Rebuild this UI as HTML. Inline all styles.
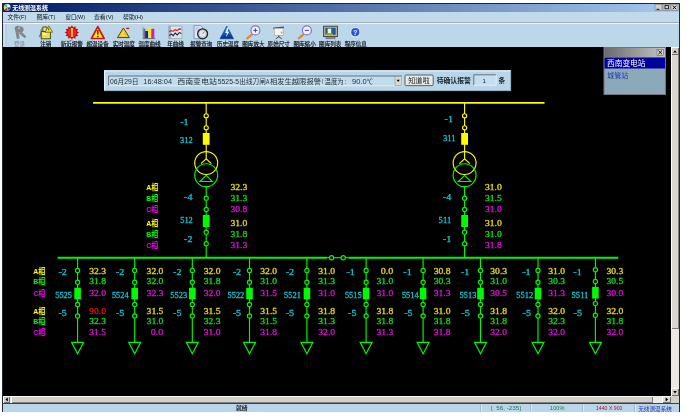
<!DOCTYPE html><html lang="zh-CN"><head><meta charset="utf-8"><title>无线测温系统</title>
<style>
html,body{margin:0;padding:0;background:#fff;}
body{width:686px;height:418px;position:relative;overflow:hidden;font-family:"Liberation Sans","Noto Sans CJK SC",sans-serif;}
.abs{position:absolute;}
svg text{white-space:pre;}
</style></head><body>
<div class="abs" style="left:2px;top:3px;width:678px;height:409px;background:#1c2a3a;"></div>
<div class="abs" style="left:3px;top:3px;width:676px;height:409px;background:#bcd7eb;"></div>
<div class="abs" style="left:3px;top:3px;width:676px;height:9px;background:linear-gradient(to right,#0a246a 0%,#0a246a 6%,#a6caf0 100%);border-top:1px solid #16264a;box-sizing:border-box;"></div>
<div class="abs" style="left:3px;top:12px;width:676px;height:11px;background:#c0daec;"></div>
<div class="abs" style="left:3px;top:22px;width:676px;height:25px;background:#bcd6ea;border-top:1px solid #a4adb5;box-sizing:border-box;box-shadow:inset 0 1px 0 #eef5fb;"></div>
<div class="abs" style="left:3px;top:47px;width:668px;height:349px;background:#000;"></div>
<div class="abs" style="left:671px;top:47px;width:8px;height:349px;background:#ebe9e4;"></div>
<div class="abs" style="left:671px;top:47px;width:8px;height:282px;background:#dad7d0;box-shadow:inset 1px 1px 0 #fff,inset -1px -1px 0 #808080;"></div>
<div class="abs" style="left:671px;top:47px;width:8px;height:8px;background:#d4d0c8;box-shadow:inset 1px 1px 0 #fff,inset -1px -1px 0 #707070;"></div>
<div class="abs" style="left:671px;top:388px;width:8px;height:8px;background:#d4d0c8;box-shadow:inset 1px 1px 0 #fff,inset -1px -1px 0 #707070;"></div>
<div class="abs" style="left:3px;top:396px;width:676px;height:8px;background:#d4d0c8;border-bottom:1px solid #404040;box-sizing:border-box;"></div>
<div class="abs" style="left:3px;top:396px;width:668px;height:7px;background:#eceae5;"></div>
<div class="abs" style="left:11px;top:396px;width:642px;height:7px;background:#d4d0c8;box-shadow:inset 1px 1px 0 #fff,inset -1px -1px 0 #808080;"></div>
<div class="abs" style="left:3px;top:396px;width:7px;height:7px;background:#d4d0c8;box-shadow:inset 1px 1px 0 #fff,inset -1px -1px 0 #707070;"></div>
<div class="abs" style="left:662px;top:396px;width:9px;height:7px;background:#dedcd6;box-shadow:inset 1px 1px 0 #fff,inset -1px -1px 0 #707070;"></div>
<div class="abs" style="left:3px;top:404px;width:676px;height:8px;background:#b9d5ea;"></div>
<svg class="abs" style="left:0;top:0;will-change:transform" width="686" height="418" viewBox="0 0 686 418">
<circle cx="7.2" cy="7.4" r="3.3" fill="#f4f4f4"/><path d="M7.2 7.4L4.2 5.9A3.3 3.3 0 0 0 4.6 9.5Z" fill="#f4dc10"/><path d="M7.2 7.4L4.6 9.5A3.3 3.3 0 0 0 7.6 10.7Z" fill="#f01808"/><path d="M7.2 7.4L4.2 5.9A3.3 3.3 0 0 1 7.2 4.1Z" fill="#20c8a8"/><path d="M7.2 7.4L10.5 7.2A3.3 3.3 0 0 1 8.8 10.3Z" fill="#1838e0"/>
<text x="12.20" y="10.10" font-size="6.20" fill="#fff" text-anchor="start" font-weight="bold" font-family='"Liberation Sans","Noto Sans CJK SC",sans-serif' textLength="35.80" lengthAdjust="spacingAndGlyphs" >无线测温系统</text>
<rect x="655" y="4.2" width="7" height="6.3" fill="#d4d0c8" stroke="#666" stroke-width="0.5"/>
<rect x="663" y="4.2" width="7" height="6.3" fill="#d4d0c8" stroke="#666" stroke-width="0.5"/>
<rect x="671" y="4.2" width="7" height="6.3" fill="#d4d0c8" stroke="#666" stroke-width="0.5"/>
<path d="M656.5 9.3h3" stroke="#000" stroke-width="0.9"/>
<rect x="665" y="5.6" width="3.4" height="3.2" fill="none" stroke="#000" stroke-width="0.8"/>
<path d="M672.8 5.6l3.4 3.6M676.2 5.6l-3.4 3.6" stroke="#000" stroke-width="0.9"/>
<text x="7.50" y="18.60" font-size="5.80" fill="#101820" text-anchor="start" font-weight="normal" font-family='"Liberation Sans","Noto Sans CJK SC",sans-serif' textLength="19.00" lengthAdjust="spacingAndGlyphs" >文件(F)</text>
<text x="36.50" y="18.60" font-size="5.80" fill="#101820" text-anchor="start" font-weight="normal" font-family='"Liberation Sans","Noto Sans CJK SC",sans-serif' textLength="19.00" lengthAdjust="spacingAndGlyphs" >图库(T)</text>
<text x="65.50" y="18.60" font-size="5.80" fill="#101820" text-anchor="start" font-weight="normal" font-family='"Liberation Sans","Noto Sans CJK SC",sans-serif' textLength="19.50" lengthAdjust="spacingAndGlyphs" >窗口(W)</text>
<text x="94.00" y="18.60" font-size="5.80" fill="#101820" text-anchor="start" font-weight="normal" font-family='"Liberation Sans","Noto Sans CJK SC",sans-serif' textLength="19.50" lengthAdjust="spacingAndGlyphs" >查看(V)</text>
<text x="123.00" y="18.60" font-size="5.80" fill="#101820" text-anchor="start" font-weight="normal" font-family='"Liberation Sans","Noto Sans CJK SC",sans-serif' textLength="20.00" lengthAdjust="spacingAndGlyphs" >帮助(H)</text>
<path d="M5 24.5v21.5" stroke="#e8f2fa" stroke-width="1"/><path d="M5.8 24.5v21.5" stroke="#9fb4c4" stroke-width="0.7"/>
<text x="13.95" y="45.50" font-size="5.60" fill="#8a9aa6" text-anchor="start" font-weight="normal" font-family='"Liberation Sans","Noto Sans CJK SC",sans-serif' textLength="11.10" lengthAdjust="spacingAndGlyphs" stroke="#8a9aa6" stroke-width="0.18">登录</text>
<text x="40.25" y="45.50" font-size="5.60" fill="#101820" text-anchor="start" font-weight="normal" font-family='"Liberation Sans","Noto Sans CJK SC",sans-serif' textLength="11.10" lengthAdjust="spacingAndGlyphs" stroke="#101820" stroke-width="0.18">注销</text>
<text x="60.70" y="45.50" font-size="5.60" fill="#101820" text-anchor="start" font-weight="normal" font-family='"Liberation Sans","Noto Sans CJK SC",sans-serif' textLength="22.20" lengthAdjust="spacingAndGlyphs" stroke="#101820" stroke-width="0.18">新近报警</text>
<text x="86.50" y="45.50" font-size="5.60" fill="#101820" text-anchor="start" font-weight="normal" font-family='"Liberation Sans","Noto Sans CJK SC",sans-serif' textLength="22.20" lengthAdjust="spacingAndGlyphs" stroke="#101820" stroke-width="0.18">超温设备</text>
<text x="112.70" y="45.50" font-size="5.60" fill="#101820" text-anchor="start" font-weight="normal" font-family='"Liberation Sans","Noto Sans CJK SC",sans-serif' textLength="22.20" lengthAdjust="spacingAndGlyphs" stroke="#101820" stroke-width="0.18">实时温度</text>
<text x="138.40" y="45.50" font-size="5.60" fill="#101820" text-anchor="start" font-weight="normal" font-family='"Liberation Sans","Noto Sans CJK SC",sans-serif' textLength="22.20" lengthAdjust="spacingAndGlyphs" stroke="#101820" stroke-width="0.18">温度曲线</text>
<text x="167.28" y="45.50" font-size="5.60" fill="#101820" text-anchor="start" font-weight="normal" font-family='"Liberation Sans","Noto Sans CJK SC",sans-serif' textLength="16.65" lengthAdjust="spacingAndGlyphs" stroke="#101820" stroke-width="0.18">年曲线</text>
<text x="190.20" y="45.50" font-size="5.60" fill="#101820" text-anchor="start" font-weight="normal" font-family='"Liberation Sans","Noto Sans CJK SC",sans-serif' textLength="22.20" lengthAdjust="spacingAndGlyphs" stroke="#101820" stroke-width="0.18">报警查询</text>
<text x="216.90" y="45.50" font-size="5.60" fill="#101820" text-anchor="start" font-weight="normal" font-family='"Liberation Sans","Noto Sans CJK SC",sans-serif' textLength="22.20" lengthAdjust="spacingAndGlyphs" stroke="#101820" stroke-width="0.18">历史温度</text>
<text x="242.30" y="45.50" font-size="5.60" fill="#101820" text-anchor="start" font-weight="normal" font-family='"Liberation Sans","Noto Sans CJK SC",sans-serif' textLength="22.20" lengthAdjust="spacingAndGlyphs" stroke="#101820" stroke-width="0.18">图库放大</text>
<text x="267.60" y="45.50" font-size="5.60" fill="#101820" text-anchor="start" font-weight="normal" font-family='"Liberation Sans","Noto Sans CJK SC",sans-serif' textLength="22.20" lengthAdjust="spacingAndGlyphs" stroke="#101820" stroke-width="0.18">原始尺寸</text>
<text x="293.50" y="45.50" font-size="5.60" fill="#101820" text-anchor="start" font-weight="normal" font-family='"Liberation Sans","Noto Sans CJK SC",sans-serif' textLength="22.20" lengthAdjust="spacingAndGlyphs" stroke="#101820" stroke-width="0.18">图库缩小</text>
<text x="319.10" y="45.50" font-size="5.60" fill="#101820" text-anchor="start" font-weight="normal" font-family='"Liberation Sans","Noto Sans CJK SC",sans-serif' textLength="22.20" lengthAdjust="spacingAndGlyphs" stroke="#101820" stroke-width="0.18">图库列表</text>
<text x="344.70" y="45.50" font-size="5.60" fill="#101820" text-anchor="start" font-weight="normal" font-family='"Liberation Sans","Noto Sans CJK SC",sans-serif' textLength="22.20" lengthAdjust="spacingAndGlyphs" stroke="#101820" stroke-width="0.18">程序信息</text>
<g fill="#858585"><circle cx="17.8" cy="28.8" r="3.1"/><circle cx="20.6" cy="29.4" r="3"/><path d="M18.4 30l1.2 8.6-2.8.4-1.4-8zM20.6 31l5.6 5.2-1.4 2-5.8-4.6z"/></g><circle cx="19.0" cy="28" r="0.9" fill="#b8c8d4"/>
<path d="M42.4 30.5l-3 6.5" stroke="#707880" stroke-width="1.6"/><circle cx="42.0" cy="30.2" r="1.7" fill="#9098a0"/>
<path d="M42.4 32v-2.8a2.4 2.4 0 0 1 4.8 0v2.8" fill="none" stroke="#8a7a10" stroke-width="1.5"/>
<rect x="41.2" y="31.6" width="9.2" height="7.2" fill="#f0e040" stroke="#3a3a20" stroke-width="0.9"/>
<rect x="42.6" y="33" width="4" height="2" fill="#fbf6a0"/>
<path d="M48.8 25.8l3.8 6.4h-7.6z" fill="#f8ec20" stroke="#4a4a18" stroke-width="0.7" stroke-linejoin="round"/>
<path d="M48.8 28v2.4" stroke="#403808" stroke-width="0.9"/>
<polygon points="79.1,32.5 76.9,33.8 78.1,36.1 75.6,36.2 75.5,38.7 73.2,37.5 71.9,39.7 70.6,37.5 68.3,38.7 68.2,36.2 65.7,36.1 66.9,33.8 64.7,32.5 66.9,31.2 65.7,28.9 68.2,28.8 68.3,26.3 70.6,27.5 71.9,25.3 73.2,27.5 75.5,26.3 75.6,28.8 78.1,28.9 76.9,31.2" fill="#b80c0c"/><circle cx="71.9" cy="32.5" r="4.6" fill="#f42018"/><rect x="71.2" y="28" width="1.5" height="9" fill="#f4e468"/>
<path d="M97.8 26.6l6.3 11.9h-12.6z" fill="#f8f020" stroke="#d01414" stroke-width="1.7" stroke-linejoin="round"/><path d="M97.8 30v4.6" stroke="#c01010" stroke-width="1.7"/><circle cx="97.8" cy="36.5" r="0.95" fill="#c01010"/>
<path d="M123.4 28l6 9.6h-12z" fill="#f6c628" stroke="#5a4408" stroke-width="1" stroke-linejoin="round"/><path d="M126.2 28.4h3" stroke="#e81010" stroke-width="1.4"/><path d="M123.8 31.5l-2 4h3.4" stroke="#fbe88a" stroke-width="0.9" fill="none"/>
<rect x="143.2" y="28.6" width="2.2" height="9.6" fill="#6a7480"/><rect x="145.2" y="31" width="3" height="7.4" fill="#1818c8"/><rect x="148.1" y="27" width="3.2" height="11.4" fill="#ecec18"/><rect x="151.3" y="28.8" width="3" height="9.6" fill="#d418c8"/><path d="M142.8 38.6h12.4" stroke="#606870" stroke-width="0.9"/><path d="M143 26.6v12" stroke="#8a949e" stroke-width="0.7"/>
<rect x="168.6" y="26" width="13.4" height="12.6" fill="#d9e4ed" stroke="#95a3ae" stroke-width="0.7"/><path d="M169.2 31.6l2-1 2 .6 2-1.6 2 1 2-1.8 2.2 .4" stroke="#e01818" stroke-width="1.2" fill="none"/><path d="M169.2 35.6l2-1.6 2 1.6 2-2.6 2 2 2-2.4 2.2 .8" stroke="#20282e" stroke-width="1.1" fill="none"/><path d="M170 26.4v12" stroke="#55606a" stroke-width="0.8"/>
<path d="M194 25.6h6.5l2.5 2.5v10.6h-9z" fill="#dce8f8" stroke="#7088a8" stroke-width="0.8"/><path d="M195.5 28h4M195.5 30h3" stroke="#88a8d8" stroke-width="0.7"/><circle cx="202.6" cy="33.8" r="5" fill="#b4bcc4" stroke="#1c2228" stroke-width="1.2"/><circle cx="202.6" cy="33.8" r="3.2" fill="#e2e8ec"/><path d="M202.6 33.8l1.8-2.2" stroke="#c07818" stroke-width="0.9"/>
<defs><linearGradient id="bg9" x1="0" y1="0" x2="0" y2="1"><stop offset="0" stop-color="#2a9af0"/><stop offset="0.6" stop-color="#0a58c8"/><stop offset="1" stop-color="#052a70"/></linearGradient></defs>
<path d="M226.8 26l6.8 12.8h-13.6z" fill="url(#bg9)" stroke="#0a3a90" stroke-width="0.6" stroke-linejoin="round"/><path d="M227.2 27.6l-2 5.4h1.8l-1.2 4.2 3.4-5.4h-1.8l1.4-4.2z" fill="#f0f8ff"/>
<path d="M251.8 34.6l-4.6 3.8" stroke="#e08a28" stroke-width="2.2" stroke-linecap="round"/><circle cx="255.4" cy="30.4" r="4.5" fill="#eef0fc" stroke="#8078c0" stroke-width="1.2"/>
<path d="M253.3 30.4h4.2" stroke="#303878" stroke-width="0.9"/>
<path d="M255.4 28.3v4.2" stroke="#303878" stroke-width="0.9"/>
<path d="M273.4 27.6l10.6-1.2v1.6l-10.6 1.2z" fill="#555"/><rect x="274.4" y="28.4" width="8.8" height="7" fill="#f4f4f2" stroke="#a4a4a0" stroke-width="0.6"/><path d="M278.8 35.4v2M278.8 36.6l-3 2.2M278.8 36.6l3 2.2" stroke="#5a4a38" stroke-width="1" fill="none"/><circle cx="281.6" cy="32.6" r="1" fill="#c8a870"/>
<path d="M303.3 34.6l-4.6 3.8" stroke="#e08a28" stroke-width="2.2" stroke-linecap="round"/><circle cx="306.9" cy="30.4" r="4.5" fill="#eef0fc" stroke="#8078c0" stroke-width="1.2"/>
<path d="M304.8 30.4h4.2" stroke="#303878" stroke-width="0.9"/>
<rect x="323.6" y="26.2" width="13.8" height="10.4" fill="#b4b4ae" stroke="#3a3a3a" stroke-width="0.9"/><rect x="325.4" y="27.8" width="10.2" height="7" fill="#1e5a6c"/><rect x="327.6" y="28.6" width="3.8" height="4.8" fill="#f4f0d8"/><rect x="331.6" y="29" width="2.4" height="4" fill="#2858c0"/><rect x="326" y="33.6" width="7" height="1" fill="#e0c020"/><rect x="326" y="37" width="9" height="1.8" fill="#a0a09a" stroke="#505050" stroke-width="0.5"/>
<circle cx="355.3" cy="32.2" r="5.2" fill="#f4f7fb" stroke="#c0ccd8" stroke-width="0.6"/><circle cx="355.3" cy="32.2" r="4.1" fill="#2456d8"/>
<text x="355.30" y="34.60" font-size="6.60" fill="#fff" text-anchor="middle" font-weight="bold" font-family='"Liberation Sans","Noto Sans CJK SC",sans-serif' >?</text>
<rect x="104" y="70.2" width="407" height="20.8" fill="#b7d6ea"/>
<path d="M104.7 91V70.9H511" stroke="#e4f0f8" stroke-width="1.4" fill="none"/>
<path d="M104 90.7H510.7V70.2" stroke="#8899a6" stroke-width="0.8" fill="none"/>
<rect x="108.4" y="75.8" width="293.6" height="10" fill="#c2dcee"/>
<path d="M108.6 85.8V76H402" stroke="#5a6670" stroke-width="0.9" fill="none"/>
<path d="M108.6 85.8H402V76" stroke="#eaf3f9" stroke-width="0.8" fill="none"/>
<text x="109.90" y="83.50" font-size="6.60" fill="#28323a" text-anchor="start" font-weight="normal" font-family='"Liberation Sans","Noto Sans CJK SC",sans-serif' textLength="28.50" lengthAdjust="spacingAndGlyphs" >06月29日</text>
<text x="143.30" y="83.50" font-size="6.60" fill="#28323a" text-anchor="start" font-weight="normal" font-family='"Liberation Sans","Noto Sans CJK SC",sans-serif' textLength="28.70" lengthAdjust="spacingAndGlyphs" >16:48:04</text>
<text x="177.20" y="83.50" font-size="6.60" fill="#28323a" text-anchor="start" font-weight="normal" font-family='"Liberation Sans","Noto Sans CJK SC",sans-serif' textLength="39.80" lengthAdjust="spacingAndGlyphs" >西南变电站</text>
<text x="217.80" y="83.50" font-size="6.60" fill="#28323a" text-anchor="start" font-weight="normal" font-family='"Liberation Sans","Noto Sans CJK SC",sans-serif' textLength="21.20" lengthAdjust="spacingAndGlyphs" >5525-5</text>
<text x="239.30" y="83.50" font-size="6.60" fill="#28323a" text-anchor="start" font-weight="normal" font-family='"Liberation Sans","Noto Sans CJK SC",sans-serif' textLength="26.50" lengthAdjust="spacingAndGlyphs" >出线刀闸</text>
<text x="266.00" y="83.50" font-size="6.60" fill="#28323a" text-anchor="start" font-weight="normal" font-family='"Liberation Sans","Noto Sans CJK SC",sans-serif' textLength="3.30" lengthAdjust="spacingAndGlyphs" >A</text>
<text x="269.90" y="83.50" font-size="6.60" fill="#28323a" text-anchor="start" font-weight="normal" font-family='"Liberation Sans","Noto Sans CJK SC",sans-serif' textLength="51.10" lengthAdjust="spacingAndGlyphs" >相发生越限报警</text>
<text x="322.00" y="83.50" font-size="6.60" fill="#28323a" text-anchor="start" font-weight="normal" font-family='"Liberation Sans","Noto Sans CJK SC",sans-serif' textLength="1.60" lengthAdjust="spacingAndGlyphs" >!</text>
<text x="324.50" y="83.50" font-size="6.60" fill="#28323a" text-anchor="start" font-weight="normal" font-family='"Liberation Sans","Noto Sans CJK SC",sans-serif' textLength="19.30" lengthAdjust="spacingAndGlyphs" >温度为</text>
<text x="344.40" y="83.50" font-size="6.60" fill="#28323a" text-anchor="start" font-weight="normal" font-family='"Liberation Sans","Noto Sans CJK SC",sans-serif' textLength="1.60" lengthAdjust="spacingAndGlyphs" >:</text>
<text x="352.00" y="83.50" font-size="6.60" fill="#28323a" text-anchor="start" font-weight="normal" font-family='"Liberation Sans","Noto Sans CJK SC",sans-serif' textLength="14.60" lengthAdjust="spacingAndGlyphs" >90.0</text>
<text x="366.80" y="83.50" font-size="6.60" fill="#28323a" text-anchor="start" font-weight="normal" font-family='"Liberation Sans","Noto Sans CJK SC",sans-serif' textLength="6.20" lengthAdjust="spacingAndGlyphs" >℃</text>
<rect x="395" y="76.4" width="6.4" height="9" fill="#dcdad4" stroke="#808080" stroke-width="0.5"/><path d="M396.6 79.8l1.6 2.2 1.6-2.2z" fill="#000"/>
<rect x="405" y="75" width="28.2" height="10.6" rx="1.2" fill="#e8e8e4" stroke="#4a525a" stroke-width="0.9"/>
<text x="408.20" y="83.30" font-size="6.90" fill="#182028" text-anchor="start" font-weight="normal" font-family='"Liberation Sans","Noto Sans CJK SC",sans-serif' textLength="21.50" lengthAdjust="spacingAndGlyphs" >知道啦</text>
<text x="436.70" y="83.20" font-size="6.90" fill="#182028" text-anchor="start" font-weight="bold" font-family='"Liberation Sans","Noto Sans CJK SC",sans-serif' textLength="34.20" lengthAdjust="spacingAndGlyphs" >待确认报警</text>
<rect x="473.6" y="74.6" width="22.6" height="10.6" fill="#c4deef"/>
<path d="M473.8 85.2V74.8H496.2" stroke="#5a6670" stroke-width="0.9" fill="none"/>
<path d="M473.8 85.2H496.2V74.8" stroke="#eef5fa" stroke-width="0.8" fill="none"/>
<text x="484.20" y="82.80" font-size="6.20" fill="#182028" text-anchor="middle" font-weight="normal" font-family='"Liberation Sans","Noto Sans CJK SC",sans-serif' >1</text>
<text x="498.60" y="83.20" font-size="6.60" fill="#182028" text-anchor="start" font-weight="bold" font-family='"Liberation Sans","Noto Sans CJK SC",sans-serif' >条</text>
<rect x="604" y="47.5" width="61.5" height="47" fill="#8ba9b9" stroke="#6c7880" stroke-width="1"/>
<defs><linearGradient id="pg" x1="0" x2="1"><stop offset="0" stop-color="#6a6a6a"/><stop offset="1" stop-color="#c4c4c4"/></linearGradient></defs>
<rect x="604.5" y="48" width="60.5" height="9" fill="url(#pg)"/>
<rect x="657" y="49.4" width="6.4" height="6" fill="#d4d0c8" stroke="#555" stroke-width="0.5"/><path d="M658.4 50.6l3.6 3.6M662 50.6l-3.6 3.6" stroke="#000" stroke-width="0.9"/>
<rect x="604.5" y="57.5" width="60.5" height="11" fill="#00009c"/>
<text x="607.00" y="66.30" font-size="7.60" fill="#fff" text-anchor="start" font-weight="normal" font-family='"Liberation Sans","Noto Sans CJK SC",sans-serif' textLength="38.50" lengthAdjust="spacingAndGlyphs" >西南变电站</text>
<text x="607.00" y="77.60" font-size="6.60" fill="#2038b8" text-anchor="start" font-weight="normal" font-family='"Liberation Sans","Noto Sans CJK SC",sans-serif' textLength="21.50" lengthAdjust="spacingAndGlyphs" >城管站</text>
<text x="236.00" y="410.20" font-size="5.60" fill="#101820" text-anchor="start" font-weight="normal" font-family='"Liberation Sans","Noto Sans CJK SC",sans-serif' textLength="11.60" lengthAdjust="spacingAndGlyphs" stroke="#101820" stroke-width="0.15">就绪</text>
<path d="M480.6 404.5v7" stroke="#8fa6b8" stroke-width="0.8"/><path d="M481.4 404.5v7" stroke="#eef6fc" stroke-width="0.8"/>
<path d="M530.6 404.5v7" stroke="#8fa6b8" stroke-width="0.8"/><path d="M531.4 404.5v7" stroke="#eef6fc" stroke-width="0.8"/>
<path d="M582.8 404.5v7" stroke="#8fa6b8" stroke-width="0.8"/><path d="M583.6 404.5v7" stroke="#eef6fc" stroke-width="0.8"/>
<path d="M634.6 404.5v7" stroke="#8fa6b8" stroke-width="0.8"/><path d="M635.4 404.5v7" stroke="#eef6fc" stroke-width="0.8"/>
<text x="491.00" y="410.40" font-size="5.00" fill="#207858" text-anchor="start" font-weight="normal" font-family='"Liberation Sans",sans-serif' textLength="30.00" lengthAdjust="spacingAndGlyphs" >[  56, -235]</text>
<text x="550.00" y="410.40" font-size="5.00" fill="#207858" text-anchor="start" font-weight="normal" font-family='"Liberation Sans",sans-serif' textLength="14.40" lengthAdjust="spacingAndGlyphs" >100%</text>
<text x="596.00" y="410.40" font-size="5.00" fill="#a02030" text-anchor="start" font-weight="normal" font-family='"Liberation Sans",sans-serif' textLength="26.40" lengthAdjust="spacingAndGlyphs" >1440 X 900</text>
<text x="638.20" y="410.60" font-size="5.80" fill="#2030b0" text-anchor="start" font-weight="normal" font-family='"Liberation Sans","Noto Sans CJK SC",sans-serif' textLength="33.80" lengthAdjust="spacingAndGlyphs" >无线测温系统</text>
<path d="M673.2 52.6l1.8-2.4 1.8 2.4z" fill="#000"/><path d="M673.2 391l1.8 2.4 1.8-2.4z" fill="#000"/>
<path d="M7.8 397.6l-2.4 1.9 2.4 1.9z" fill="#000"/><path d="M665.6 397.5l2.6 2-2.6 2z" fill="#000"/>
<path d="M93.00 102.90L544.50 102.90" stroke="#fcfc00" stroke-width="1.70" fill="none"/>
<path d="M206.20 102.80L206.20 151.30" stroke="#fcfc00" stroke-width="1.15" fill="none"/>
<circle cx="206.20" cy="115.80" r="2.10" fill="#000" stroke="#fcfc00" stroke-width="1.15"/>
<circle cx="206.20" cy="127.80" r="2.10" fill="#000" stroke="#fcfc00" stroke-width="1.15"/>
<rect x="202.80" y="133.00" width="6.80" height="11.80" fill="#fcfc00"/>
<circle cx="206.20" cy="163.00" r="11.45" fill="none" stroke="#fcfc00" stroke-width="1.15"/>
<circle cx="206.20" cy="175.20" r="11.45" fill="none" stroke="#00f800" stroke-width="1.15"/>
<path d="M206.20 151.30L206.20 158.80" stroke="#fcfc00" stroke-width="1.15" fill="none"/>
<path d="M201.00 163.70L206.20 158.80L211.40 163.70" stroke="#fcfc00" stroke-width="1.15" fill="none"/>
<path d="M206.20 175.40L200.00 181.50L212.40 181.50Z" stroke="#00f800" stroke-width="1.15" fill="none"/>
<path d="M206.20 187.00L206.20 257.60" stroke="#00f800" stroke-width="1.15" fill="none"/>
<circle cx="206.20" cy="198.20" r="2.10" fill="#000" stroke="#00f800" stroke-width="1.15"/>
<circle cx="206.20" cy="209.50" r="2.10" fill="#000" stroke="#00f800" stroke-width="1.15"/>
<rect x="202.80" y="215.00" width="6.80" height="12.00" fill="#00f800"/>
<circle cx="206.20" cy="232.20" r="2.10" fill="#000" stroke="#00f800" stroke-width="1.15"/>
<circle cx="206.20" cy="243.70" r="2.10" fill="#000" stroke="#00f800" stroke-width="1.15"/>
<text x="180.20" y="125.20" font-size="8.10" fill="#10d0e0" text-anchor="start" font-weight="normal" font-family='"Liberation Serif","Noto Serif CJK SC",serif' textLength="8.40" lengthAdjust="spacingAndGlyphs" stroke="#10d0e0" stroke-width="0.3" opacity="0.92">-1</text>
<text x="180.00" y="142.70" font-size="8.10" fill="#10d0e0" text-anchor="start" font-weight="normal" font-family='"Liberation Serif","Noto Serif CJK SC",serif' textLength="12.60" lengthAdjust="spacingAndGlyphs" stroke="#10d0e0" stroke-width="0.3" opacity="0.92">312</text>
<text x="184.10" y="199.70" font-size="8.10" fill="#10d0e0" text-anchor="start" font-weight="normal" font-family='"Liberation Serif","Noto Serif CJK SC",serif' textLength="8.40" lengthAdjust="spacingAndGlyphs" stroke="#10d0e0" stroke-width="0.3" opacity="0.92">-4</text>
<text x="180.20" y="223.10" font-size="8.10" fill="#10d0e0" text-anchor="start" font-weight="normal" font-family='"Liberation Serif","Noto Serif CJK SC",serif' textLength="12.60" lengthAdjust="spacingAndGlyphs" stroke="#10d0e0" stroke-width="0.3" opacity="0.92">512</text>
<text x="184.10" y="241.60" font-size="8.10" fill="#10d0e0" text-anchor="start" font-weight="normal" font-family='"Liberation Serif","Noto Serif CJK SC",serif' textLength="8.40" lengthAdjust="spacingAndGlyphs" stroke="#10d0e0" stroke-width="0.3" opacity="0.92">-2</text>
<text x="230.50" y="190.20" font-size="8.10" fill="#f0e418" text-anchor="start" font-weight="normal" font-family='"Liberation Serif","Noto Serif CJK SC",serif' textLength="16.80" lengthAdjust="spacingAndGlyphs" stroke="#f0e418" stroke-width="0.3" opacity="0.92">32.3</text>
<text x="230.50" y="200.90" font-size="8.10" fill="#10e818" text-anchor="start" font-weight="normal" font-family='"Liberation Serif","Noto Serif CJK SC",serif' textLength="16.80" lengthAdjust="spacingAndGlyphs" stroke="#10e818" stroke-width="0.3" opacity="0.92">31.3</text>
<text x="230.50" y="211.70" font-size="8.10" fill="#e810e0" text-anchor="start" font-weight="normal" font-family='"Liberation Serif","Noto Serif CJK SC",serif' textLength="16.80" lengthAdjust="spacingAndGlyphs" stroke="#e810e0" stroke-width="0.3" opacity="0.92">30.8</text>
<text x="230.50" y="225.90" font-size="8.10" fill="#f0e418" text-anchor="start" font-weight="normal" font-family='"Liberation Serif","Noto Serif CJK SC",serif' textLength="16.80" lengthAdjust="spacingAndGlyphs" stroke="#f0e418" stroke-width="0.3" opacity="0.92">31.0</text>
<text x="230.50" y="236.60" font-size="8.10" fill="#10e818" text-anchor="start" font-weight="normal" font-family='"Liberation Serif","Noto Serif CJK SC",serif' textLength="16.80" lengthAdjust="spacingAndGlyphs" stroke="#10e818" stroke-width="0.3" opacity="0.92">31.8</text>
<text x="230.50" y="247.60" font-size="8.10" fill="#e810e0" text-anchor="start" font-weight="normal" font-family='"Liberation Serif","Noto Serif CJK SC",serif' textLength="16.80" lengthAdjust="spacingAndGlyphs" stroke="#e810e0" stroke-width="0.3" opacity="0.92">31.3</text>
<path d="M464.60 102.80L464.60 151.30" stroke="#fcfc00" stroke-width="1.15" fill="none"/>
<circle cx="464.60" cy="115.80" r="2.10" fill="#000" stroke="#fcfc00" stroke-width="1.15"/>
<circle cx="464.60" cy="127.80" r="2.10" fill="#000" stroke="#fcfc00" stroke-width="1.15"/>
<rect x="461.20" y="133.00" width="6.80" height="11.80" fill="#fcfc00"/>
<circle cx="464.60" cy="163.00" r="11.45" fill="none" stroke="#fcfc00" stroke-width="1.15"/>
<circle cx="464.60" cy="175.20" r="11.45" fill="none" stroke="#00f800" stroke-width="1.15"/>
<path d="M464.60 151.30L464.60 158.80" stroke="#fcfc00" stroke-width="1.15" fill="none"/>
<path d="M459.40 163.70L464.60 158.80L469.80 163.70" stroke="#fcfc00" stroke-width="1.15" fill="none"/>
<path d="M464.60 175.40L458.40 181.50L470.80 181.50Z" stroke="#00f800" stroke-width="1.15" fill="none"/>
<path d="M464.60 187.00L464.60 257.60" stroke="#00f800" stroke-width="1.15" fill="none"/>
<circle cx="464.60" cy="198.20" r="2.10" fill="#000" stroke="#00f800" stroke-width="1.15"/>
<circle cx="464.60" cy="209.50" r="2.10" fill="#000" stroke="#00f800" stroke-width="1.15"/>
<rect x="461.20" y="215.00" width="6.80" height="12.00" fill="#00f800"/>
<circle cx="464.60" cy="232.20" r="2.10" fill="#000" stroke="#00f800" stroke-width="1.15"/>
<circle cx="464.60" cy="243.70" r="2.10" fill="#000" stroke="#00f800" stroke-width="1.15"/>
<text x="444.60" y="122.10" font-size="8.10" fill="#10d0e0" text-anchor="start" font-weight="normal" font-family='"Liberation Serif","Noto Serif CJK SC",serif' textLength="8.40" lengthAdjust="spacingAndGlyphs" stroke="#10d0e0" stroke-width="0.3" opacity="0.92">-1</text>
<text x="443.00" y="141.20" font-size="8.10" fill="#10d0e0" text-anchor="start" font-weight="normal" font-family='"Liberation Serif","Noto Serif CJK SC",serif' textLength="12.60" lengthAdjust="spacingAndGlyphs" stroke="#10d0e0" stroke-width="0.3" opacity="0.92">311</text>
<text x="442.80" y="199.70" font-size="8.10" fill="#10d0e0" text-anchor="start" font-weight="normal" font-family='"Liberation Serif","Noto Serif CJK SC",serif' textLength="8.40" lengthAdjust="spacingAndGlyphs" stroke="#10d0e0" stroke-width="0.3" opacity="0.92">-4</text>
<text x="438.60" y="223.10" font-size="8.10" fill="#10d0e0" text-anchor="start" font-weight="normal" font-family='"Liberation Serif","Noto Serif CJK SC",serif' textLength="12.60" lengthAdjust="spacingAndGlyphs" stroke="#10d0e0" stroke-width="0.3" opacity="0.92">511</text>
<text x="442.80" y="241.60" font-size="8.10" fill="#10d0e0" text-anchor="start" font-weight="normal" font-family='"Liberation Serif","Noto Serif CJK SC",serif' textLength="8.40" lengthAdjust="spacingAndGlyphs" stroke="#10d0e0" stroke-width="0.3" opacity="0.92">-1</text>
<text x="485.00" y="190.20" font-size="8.10" fill="#f0e418" text-anchor="start" font-weight="normal" font-family='"Liberation Serif","Noto Serif CJK SC",serif' textLength="16.80" lengthAdjust="spacingAndGlyphs" stroke="#f0e418" stroke-width="0.3" opacity="0.92">31.0</text>
<text x="485.00" y="200.90" font-size="8.10" fill="#10e818" text-anchor="start" font-weight="normal" font-family='"Liberation Serif","Noto Serif CJK SC",serif' textLength="16.80" lengthAdjust="spacingAndGlyphs" stroke="#10e818" stroke-width="0.3" opacity="0.92">31.5</text>
<text x="485.00" y="211.70" font-size="8.10" fill="#e810e0" text-anchor="start" font-weight="normal" font-family='"Liberation Serif","Noto Serif CJK SC",serif' textLength="16.80" lengthAdjust="spacingAndGlyphs" stroke="#e810e0" stroke-width="0.3" opacity="0.92">31.0</text>
<text x="485.00" y="225.90" font-size="8.10" fill="#f0e418" text-anchor="start" font-weight="normal" font-family='"Liberation Serif","Noto Serif CJK SC",serif' textLength="16.80" lengthAdjust="spacingAndGlyphs" stroke="#f0e418" stroke-width="0.3" opacity="0.92">31.0</text>
<text x="485.00" y="236.60" font-size="8.10" fill="#10e818" text-anchor="start" font-weight="normal" font-family='"Liberation Serif","Noto Serif CJK SC",serif' textLength="16.80" lengthAdjust="spacingAndGlyphs" stroke="#10e818" stroke-width="0.3" opacity="0.92">31.0</text>
<text x="485.00" y="247.60" font-size="8.10" fill="#e810e0" text-anchor="start" font-weight="normal" font-family='"Liberation Serif","Noto Serif CJK SC",serif' textLength="16.80" lengthAdjust="spacingAndGlyphs" stroke="#e810e0" stroke-width="0.3" opacity="0.92">31.8</text>
<text x="146.20" y="190.20" font-size="7.90" fill="#fcfc00" text-anchor="start" font-weight="bold" font-family='"Liberation Sans","Noto Sans CJK SC",sans-serif' textLength="12.00" lengthAdjust="spacingAndGlyphs" >A相</text>
<text x="146.20" y="200.90" font-size="7.90" fill="#00f800" text-anchor="start" font-weight="bold" font-family='"Liberation Sans","Noto Sans CJK SC",sans-serif' textLength="12.00" lengthAdjust="spacingAndGlyphs" >B相</text>
<text x="146.20" y="211.70" font-size="7.90" fill="#e800e8" text-anchor="start" font-weight="bold" font-family='"Liberation Sans","Noto Sans CJK SC",sans-serif' textLength="12.00" lengthAdjust="spacingAndGlyphs" >C相</text>
<text x="146.20" y="225.90" font-size="7.90" fill="#fcfc00" text-anchor="start" font-weight="bold" font-family='"Liberation Sans","Noto Sans CJK SC",sans-serif' textLength="12.00" lengthAdjust="spacingAndGlyphs" >A相</text>
<text x="146.20" y="236.60" font-size="7.90" fill="#00f800" text-anchor="start" font-weight="bold" font-family='"Liberation Sans","Noto Sans CJK SC",sans-serif' textLength="12.00" lengthAdjust="spacingAndGlyphs" >B相</text>
<text x="146.20" y="247.60" font-size="7.90" fill="#e800e8" text-anchor="start" font-weight="bold" font-family='"Liberation Sans","Noto Sans CJK SC",sans-serif' textLength="12.00" lengthAdjust="spacingAndGlyphs" >C相</text>
<path d="M57.60 257.70L327.00 257.70" stroke="#00f800" stroke-width="1.90" fill="none"/>
<path d="M327.00 257.70L329.50 257.70" stroke="#00f800" stroke-width="1.15" fill="none"/>
<path d="M348.40 257.70L618.30 257.70" stroke="#00f800" stroke-width="1.90" fill="none"/>
<path d="M345.30 257.70L348.40 257.70" stroke="#00f800" stroke-width="1.15" fill="none"/>
<path d="M333.60 257.70L341.00 257.70" stroke="#00f800" stroke-width="1.15" fill="none"/>
<circle cx="331.60" cy="257.70" r="2.10" fill="#000" stroke="#00f800" stroke-width="1.15"/>
<circle cx="343.20" cy="257.70" r="2.10" fill="#000" stroke="#00f800" stroke-width="1.15"/>
<path d="M77.60 257.70L77.60 342.20" stroke="#00f800" stroke-width="1.15" fill="none"/>
<circle cx="77.60" cy="270.50" r="2.10" fill="#000" stroke="#00f800" stroke-width="1.15"/>
<circle cx="77.60" cy="282.30" r="2.10" fill="#000" stroke="#00f800" stroke-width="1.15"/>
<rect x="74.30" y="287.70" width="6.60" height="11.70" fill="#00f800"/>
<circle cx="77.60" cy="304.40" r="2.10" fill="#000" stroke="#00f800" stroke-width="1.15"/>
<circle cx="77.60" cy="316.00" r="2.10" fill="#000" stroke="#00f800" stroke-width="1.15"/>
<path d="M71.60 342.3h12l-6 11.4z" stroke="#00f800" stroke-width="1.15" fill="none" stroke-linejoin="miter"/>
<text x="58.40" y="274.90" font-size="8.10" fill="#10d0e0" text-anchor="start" font-weight="normal" font-family='"Liberation Serif","Noto Serif CJK SC",serif' textLength="8.40" lengthAdjust="spacingAndGlyphs" stroke="#10d0e0" stroke-width="0.3" opacity="0.92">-2</text>
<text x="55.20" y="298.20" font-size="8.10" fill="#10d0e0" text-anchor="start" font-weight="normal" font-family='"Liberation Serif","Noto Serif CJK SC",serif' textLength="16.80" lengthAdjust="spacingAndGlyphs" stroke="#10d0e0" stroke-width="0.3" opacity="0.92">5525</text>
<text x="58.40" y="316.40" font-size="8.10" fill="#10d0e0" text-anchor="start" font-weight="normal" font-family='"Liberation Serif","Noto Serif CJK SC",serif' textLength="8.40" lengthAdjust="spacingAndGlyphs" stroke="#10d0e0" stroke-width="0.3" opacity="0.92">-5</text>
<text x="89.20" y="273.90" font-size="8.10" fill="#f0e418" text-anchor="start" font-weight="normal" font-family='"Liberation Serif","Noto Serif CJK SC",serif' textLength="16.80" lengthAdjust="spacingAndGlyphs" stroke="#f0e418" stroke-width="0.3" opacity="0.92">32.3</text>
<text x="89.20" y="284.20" font-size="8.10" fill="#10e818" text-anchor="start" font-weight="normal" font-family='"Liberation Serif","Noto Serif CJK SC",serif' textLength="16.80" lengthAdjust="spacingAndGlyphs" stroke="#10e818" stroke-width="0.3" opacity="0.92">31.8</text>
<text x="89.20" y="295.50" font-size="8.10" fill="#e810e0" text-anchor="start" font-weight="normal" font-family='"Liberation Serif","Noto Serif CJK SC",serif' textLength="16.80" lengthAdjust="spacingAndGlyphs" stroke="#e810e0" stroke-width="0.3" opacity="0.92">32.0</text>
<text x="89.20" y="313.90" font-size="8.10" fill="#f01010" text-anchor="start" font-weight="normal" font-family='"Liberation Serif","Noto Serif CJK SC",serif' textLength="16.80" lengthAdjust="spacingAndGlyphs" stroke="#f01010" stroke-width="0.3" opacity="0.92">90.0</text>
<text x="89.20" y="324.10" font-size="8.10" fill="#10e818" text-anchor="start" font-weight="normal" font-family='"Liberation Serif","Noto Serif CJK SC",serif' textLength="16.80" lengthAdjust="spacingAndGlyphs" stroke="#10e818" stroke-width="0.3" opacity="0.92">32.3</text>
<text x="89.20" y="335.40" font-size="8.10" fill="#e810e0" text-anchor="start" font-weight="normal" font-family='"Liberation Serif","Noto Serif CJK SC",serif' textLength="16.80" lengthAdjust="spacingAndGlyphs" stroke="#e810e0" stroke-width="0.3" opacity="0.92">31.5</text>
<path d="M134.70 257.70L134.70 342.20" stroke="#00f800" stroke-width="1.15" fill="none"/>
<circle cx="134.70" cy="270.50" r="2.10" fill="#000" stroke="#00f800" stroke-width="1.15"/>
<circle cx="134.70" cy="282.30" r="2.10" fill="#000" stroke="#00f800" stroke-width="1.15"/>
<rect x="131.40" y="287.70" width="6.60" height="11.70" fill="#00f800"/>
<circle cx="134.70" cy="304.40" r="2.10" fill="#000" stroke="#00f800" stroke-width="1.15"/>
<circle cx="134.70" cy="316.00" r="2.10" fill="#000" stroke="#00f800" stroke-width="1.15"/>
<path d="M128.70 342.3h12l-6 11.4z" stroke="#00f800" stroke-width="1.15" fill="none" stroke-linejoin="miter"/>
<text x="115.80" y="274.90" font-size="8.10" fill="#10d0e0" text-anchor="start" font-weight="normal" font-family='"Liberation Serif","Noto Serif CJK SC",serif' textLength="8.40" lengthAdjust="spacingAndGlyphs" stroke="#10d0e0" stroke-width="0.3" opacity="0.92">-2</text>
<text x="111.90" y="298.20" font-size="8.10" fill="#10d0e0" text-anchor="start" font-weight="normal" font-family='"Liberation Serif","Noto Serif CJK SC",serif' textLength="16.80" lengthAdjust="spacingAndGlyphs" stroke="#10d0e0" stroke-width="0.3" opacity="0.92">5524</text>
<text x="115.80" y="316.40" font-size="8.10" fill="#10d0e0" text-anchor="start" font-weight="normal" font-family='"Liberation Serif","Noto Serif CJK SC",serif' textLength="8.40" lengthAdjust="spacingAndGlyphs" stroke="#10d0e0" stroke-width="0.3" opacity="0.92">-5</text>
<text x="146.60" y="273.90" font-size="8.10" fill="#f0e418" text-anchor="start" font-weight="normal" font-family='"Liberation Serif","Noto Serif CJK SC",serif' textLength="16.80" lengthAdjust="spacingAndGlyphs" stroke="#f0e418" stroke-width="0.3" opacity="0.92">32.0</text>
<text x="146.60" y="284.20" font-size="8.10" fill="#10e818" text-anchor="start" font-weight="normal" font-family='"Liberation Serif","Noto Serif CJK SC",serif' textLength="16.80" lengthAdjust="spacingAndGlyphs" stroke="#10e818" stroke-width="0.3" opacity="0.92">32.0</text>
<text x="146.60" y="295.50" font-size="8.10" fill="#e810e0" text-anchor="start" font-weight="normal" font-family='"Liberation Serif","Noto Serif CJK SC",serif' textLength="16.80" lengthAdjust="spacingAndGlyphs" stroke="#e810e0" stroke-width="0.3" opacity="0.92">32.3</text>
<text x="146.60" y="313.90" font-size="8.10" fill="#f0e418" text-anchor="start" font-weight="normal" font-family='"Liberation Serif","Noto Serif CJK SC",serif' textLength="16.80" lengthAdjust="spacingAndGlyphs" stroke="#f0e418" stroke-width="0.3" opacity="0.92">31.5</text>
<text x="146.60" y="324.10" font-size="8.10" fill="#10e818" text-anchor="start" font-weight="normal" font-family='"Liberation Serif","Noto Serif CJK SC",serif' textLength="16.80" lengthAdjust="spacingAndGlyphs" stroke="#10e818" stroke-width="0.3" opacity="0.92">31.0</text>
<text x="150.80" y="335.40" font-size="8.10" fill="#e810e0" text-anchor="start" font-weight="normal" font-family='"Liberation Serif","Noto Serif CJK SC",serif' textLength="12.60" lengthAdjust="spacingAndGlyphs" stroke="#e810e0" stroke-width="0.3" opacity="0.92">0.0</text>
<path d="M192.30 257.70L192.30 342.20" stroke="#00f800" stroke-width="1.15" fill="none"/>
<circle cx="192.30" cy="270.50" r="2.10" fill="#000" stroke="#00f800" stroke-width="1.15"/>
<circle cx="192.30" cy="282.30" r="2.10" fill="#000" stroke="#00f800" stroke-width="1.15"/>
<rect x="189.00" y="287.70" width="6.60" height="11.70" fill="#00f800"/>
<circle cx="192.30" cy="304.40" r="2.10" fill="#000" stroke="#00f800" stroke-width="1.15"/>
<circle cx="192.30" cy="316.00" r="2.10" fill="#000" stroke="#00f800" stroke-width="1.15"/>
<path d="M186.30 342.3h12l-6 11.4z" stroke="#00f800" stroke-width="1.15" fill="none" stroke-linejoin="miter"/>
<text x="173.10" y="274.90" font-size="8.10" fill="#10d0e0" text-anchor="start" font-weight="normal" font-family='"Liberation Serif","Noto Serif CJK SC",serif' textLength="8.40" lengthAdjust="spacingAndGlyphs" stroke="#10d0e0" stroke-width="0.3" opacity="0.92">-2</text>
<text x="170.30" y="298.20" font-size="8.10" fill="#10d0e0" text-anchor="start" font-weight="normal" font-family='"Liberation Serif","Noto Serif CJK SC",serif' textLength="16.80" lengthAdjust="spacingAndGlyphs" stroke="#10d0e0" stroke-width="0.3" opacity="0.92">5523</text>
<text x="173.10" y="316.40" font-size="8.10" fill="#10d0e0" text-anchor="start" font-weight="normal" font-family='"Liberation Serif","Noto Serif CJK SC",serif' textLength="8.40" lengthAdjust="spacingAndGlyphs" stroke="#10d0e0" stroke-width="0.3" opacity="0.92">-5</text>
<text x="203.70" y="273.90" font-size="8.10" fill="#f0e418" text-anchor="start" font-weight="normal" font-family='"Liberation Serif","Noto Serif CJK SC",serif' textLength="16.80" lengthAdjust="spacingAndGlyphs" stroke="#f0e418" stroke-width="0.3" opacity="0.92">32.0</text>
<text x="203.70" y="284.20" font-size="8.10" fill="#10e818" text-anchor="start" font-weight="normal" font-family='"Liberation Serif","Noto Serif CJK SC",serif' textLength="16.80" lengthAdjust="spacingAndGlyphs" stroke="#10e818" stroke-width="0.3" opacity="0.92">31.8</text>
<text x="203.70" y="295.50" font-size="8.10" fill="#e810e0" text-anchor="start" font-weight="normal" font-family='"Liberation Serif","Noto Serif CJK SC",serif' textLength="16.80" lengthAdjust="spacingAndGlyphs" stroke="#e810e0" stroke-width="0.3" opacity="0.92">32.0</text>
<text x="203.70" y="313.90" font-size="8.10" fill="#f0e418" text-anchor="start" font-weight="normal" font-family='"Liberation Serif","Noto Serif CJK SC",serif' textLength="16.80" lengthAdjust="spacingAndGlyphs" stroke="#f0e418" stroke-width="0.3" opacity="0.92">31.5</text>
<text x="203.70" y="324.10" font-size="8.10" fill="#10e818" text-anchor="start" font-weight="normal" font-family='"Liberation Serif","Noto Serif CJK SC",serif' textLength="16.80" lengthAdjust="spacingAndGlyphs" stroke="#10e818" stroke-width="0.3" opacity="0.92">32.3</text>
<text x="203.70" y="335.40" font-size="8.10" fill="#e810e0" text-anchor="start" font-weight="normal" font-family='"Liberation Serif","Noto Serif CJK SC",serif' textLength="16.80" lengthAdjust="spacingAndGlyphs" stroke="#e810e0" stroke-width="0.3" opacity="0.92">31.0</text>
<path d="M249.50 257.70L249.50 342.20" stroke="#00f800" stroke-width="1.15" fill="none"/>
<circle cx="249.50" cy="270.50" r="2.10" fill="#000" stroke="#00f800" stroke-width="1.15"/>
<circle cx="249.50" cy="282.30" r="2.10" fill="#000" stroke="#00f800" stroke-width="1.15"/>
<rect x="246.20" y="287.70" width="6.60" height="11.70" fill="#00f800"/>
<circle cx="249.50" cy="304.40" r="2.10" fill="#000" stroke="#00f800" stroke-width="1.15"/>
<circle cx="249.50" cy="316.00" r="2.10" fill="#000" stroke="#00f800" stroke-width="1.15"/>
<path d="M243.50 342.3h12l-6 11.4z" stroke="#00f800" stroke-width="1.15" fill="none" stroke-linejoin="miter"/>
<text x="232.70" y="274.90" font-size="8.10" fill="#10d0e0" text-anchor="start" font-weight="normal" font-family='"Liberation Serif","Noto Serif CJK SC",serif' textLength="8.40" lengthAdjust="spacingAndGlyphs" stroke="#10d0e0" stroke-width="0.3" opacity="0.92">-2</text>
<text x="227.50" y="298.20" font-size="8.10" fill="#10d0e0" text-anchor="start" font-weight="normal" font-family='"Liberation Serif","Noto Serif CJK SC",serif' textLength="16.80" lengthAdjust="spacingAndGlyphs" stroke="#10d0e0" stroke-width="0.3" opacity="0.92">5522</text>
<text x="232.70" y="316.40" font-size="8.10" fill="#10d0e0" text-anchor="start" font-weight="normal" font-family='"Liberation Serif","Noto Serif CJK SC",serif' textLength="8.40" lengthAdjust="spacingAndGlyphs" stroke="#10d0e0" stroke-width="0.3" opacity="0.92">-5</text>
<text x="260.30" y="273.90" font-size="8.10" fill="#f0e418" text-anchor="start" font-weight="normal" font-family='"Liberation Serif","Noto Serif CJK SC",serif' textLength="16.80" lengthAdjust="spacingAndGlyphs" stroke="#f0e418" stroke-width="0.3" opacity="0.92">32.0</text>
<text x="260.30" y="284.20" font-size="8.10" fill="#10e818" text-anchor="start" font-weight="normal" font-family='"Liberation Serif","Noto Serif CJK SC",serif' textLength="16.80" lengthAdjust="spacingAndGlyphs" stroke="#10e818" stroke-width="0.3" opacity="0.92">31.0</text>
<text x="260.30" y="295.50" font-size="8.10" fill="#e810e0" text-anchor="start" font-weight="normal" font-family='"Liberation Serif","Noto Serif CJK SC",serif' textLength="16.80" lengthAdjust="spacingAndGlyphs" stroke="#e810e0" stroke-width="0.3" opacity="0.92">31.5</text>
<text x="260.30" y="313.90" font-size="8.10" fill="#f0e418" text-anchor="start" font-weight="normal" font-family='"Liberation Serif","Noto Serif CJK SC",serif' textLength="16.80" lengthAdjust="spacingAndGlyphs" stroke="#f0e418" stroke-width="0.3" opacity="0.92">31.5</text>
<text x="260.30" y="324.10" font-size="8.10" fill="#10e818" text-anchor="start" font-weight="normal" font-family='"Liberation Serif","Noto Serif CJK SC",serif' textLength="16.80" lengthAdjust="spacingAndGlyphs" stroke="#10e818" stroke-width="0.3" opacity="0.92">31.5</text>
<text x="260.30" y="335.40" font-size="8.10" fill="#e810e0" text-anchor="start" font-weight="normal" font-family='"Liberation Serif","Noto Serif CJK SC",serif' textLength="16.80" lengthAdjust="spacingAndGlyphs" stroke="#e810e0" stroke-width="0.3" opacity="0.92">31.8</text>
<path d="M306.90 257.70L306.90 342.20" stroke="#00f800" stroke-width="1.15" fill="none"/>
<circle cx="306.90" cy="270.50" r="2.10" fill="#000" stroke="#00f800" stroke-width="1.15"/>
<circle cx="306.90" cy="282.30" r="2.10" fill="#000" stroke="#00f800" stroke-width="1.15"/>
<rect x="303.60" y="287.70" width="6.60" height="11.70" fill="#00f800"/>
<circle cx="306.90" cy="304.40" r="2.10" fill="#000" stroke="#00f800" stroke-width="1.15"/>
<circle cx="306.90" cy="316.00" r="2.10" fill="#000" stroke="#00f800" stroke-width="1.15"/>
<path d="M300.90 342.3h12l-6 11.4z" stroke="#00f800" stroke-width="1.15" fill="none" stroke-linejoin="miter"/>
<text x="285.70" y="274.90" font-size="8.10" fill="#10d0e0" text-anchor="start" font-weight="normal" font-family='"Liberation Serif","Noto Serif CJK SC",serif' textLength="8.40" lengthAdjust="spacingAndGlyphs" stroke="#10d0e0" stroke-width="0.3" opacity="0.92">-2</text>
<text x="284.10" y="298.20" font-size="8.10" fill="#10d0e0" text-anchor="start" font-weight="normal" font-family='"Liberation Serif","Noto Serif CJK SC",serif' textLength="16.80" lengthAdjust="spacingAndGlyphs" stroke="#10d0e0" stroke-width="0.3" opacity="0.92">5521</text>
<text x="285.70" y="316.40" font-size="8.10" fill="#10d0e0" text-anchor="start" font-weight="normal" font-family='"Liberation Serif","Noto Serif CJK SC",serif' textLength="8.40" lengthAdjust="spacingAndGlyphs" stroke="#10d0e0" stroke-width="0.3" opacity="0.92">-5</text>
<text x="318.30" y="273.90" font-size="8.10" fill="#f0e418" text-anchor="start" font-weight="normal" font-family='"Liberation Serif","Noto Serif CJK SC",serif' textLength="16.80" lengthAdjust="spacingAndGlyphs" stroke="#f0e418" stroke-width="0.3" opacity="0.92">31.0</text>
<text x="318.30" y="284.20" font-size="8.10" fill="#10e818" text-anchor="start" font-weight="normal" font-family='"Liberation Serif","Noto Serif CJK SC",serif' textLength="16.80" lengthAdjust="spacingAndGlyphs" stroke="#10e818" stroke-width="0.3" opacity="0.92">31.3</text>
<text x="318.30" y="295.50" font-size="8.10" fill="#e810e0" text-anchor="start" font-weight="normal" font-family='"Liberation Serif","Noto Serif CJK SC",serif' textLength="16.80" lengthAdjust="spacingAndGlyphs" stroke="#e810e0" stroke-width="0.3" opacity="0.92">31.0</text>
<text x="318.30" y="313.90" font-size="8.10" fill="#f0e418" text-anchor="start" font-weight="normal" font-family='"Liberation Serif","Noto Serif CJK SC",serif' textLength="16.80" lengthAdjust="spacingAndGlyphs" stroke="#f0e418" stroke-width="0.3" opacity="0.92">31.8</text>
<text x="318.30" y="324.10" font-size="8.10" fill="#10e818" text-anchor="start" font-weight="normal" font-family='"Liberation Serif","Noto Serif CJK SC",serif' textLength="16.80" lengthAdjust="spacingAndGlyphs" stroke="#10e818" stroke-width="0.3" opacity="0.92">31.3</text>
<text x="318.30" y="335.40" font-size="8.10" fill="#e810e0" text-anchor="start" font-weight="normal" font-family='"Liberation Serif","Noto Serif CJK SC",serif' textLength="16.80" lengthAdjust="spacingAndGlyphs" stroke="#e810e0" stroke-width="0.3" opacity="0.92">32.0</text>
<path d="M366.10 257.70L366.10 342.20" stroke="#00f800" stroke-width="1.15" fill="none"/>
<circle cx="366.10" cy="270.50" r="2.10" fill="#000" stroke="#00f800" stroke-width="1.15"/>
<circle cx="366.10" cy="282.30" r="2.10" fill="#000" stroke="#00f800" stroke-width="1.15"/>
<rect x="362.80" y="287.70" width="6.60" height="11.70" fill="#00f800"/>
<circle cx="366.10" cy="304.40" r="2.10" fill="#000" stroke="#00f800" stroke-width="1.15"/>
<circle cx="366.10" cy="316.00" r="2.10" fill="#000" stroke="#00f800" stroke-width="1.15"/>
<path d="M360.10 342.3h12l-6 11.4z" stroke="#00f800" stroke-width="1.15" fill="none" stroke-linejoin="miter"/>
<text x="346.40" y="274.90" font-size="8.10" fill="#10d0e0" text-anchor="start" font-weight="normal" font-family='"Liberation Serif","Noto Serif CJK SC",serif' textLength="8.40" lengthAdjust="spacingAndGlyphs" stroke="#10d0e0" stroke-width="0.3" opacity="0.92">-1</text>
<text x="344.90" y="298.20" font-size="8.10" fill="#10d0e0" text-anchor="start" font-weight="normal" font-family='"Liberation Serif","Noto Serif CJK SC",serif' textLength="16.80" lengthAdjust="spacingAndGlyphs" stroke="#10d0e0" stroke-width="0.3" opacity="0.92">5515</text>
<text x="348.10" y="316.40" font-size="8.10" fill="#10d0e0" text-anchor="start" font-weight="normal" font-family='"Liberation Serif","Noto Serif CJK SC",serif' textLength="8.40" lengthAdjust="spacingAndGlyphs" stroke="#10d0e0" stroke-width="0.3" opacity="0.92">-5</text>
<text x="380.70" y="273.90" font-size="8.10" fill="#f0e418" text-anchor="start" font-weight="normal" font-family='"Liberation Serif","Noto Serif CJK SC",serif' textLength="12.60" lengthAdjust="spacingAndGlyphs" stroke="#f0e418" stroke-width="0.3" opacity="0.92">0.0</text>
<text x="376.50" y="284.20" font-size="8.10" fill="#10e818" text-anchor="start" font-weight="normal" font-family='"Liberation Serif","Noto Serif CJK SC",serif' textLength="16.80" lengthAdjust="spacingAndGlyphs" stroke="#10e818" stroke-width="0.3" opacity="0.92">31.0</text>
<text x="376.50" y="295.50" font-size="8.10" fill="#e810e0" text-anchor="start" font-weight="normal" font-family='"Liberation Serif","Noto Serif CJK SC",serif' textLength="16.80" lengthAdjust="spacingAndGlyphs" stroke="#e810e0" stroke-width="0.3" opacity="0.92">31.0</text>
<text x="376.50" y="313.90" font-size="8.10" fill="#f0e418" text-anchor="start" font-weight="normal" font-family='"Liberation Serif","Noto Serif CJK SC",serif' textLength="16.80" lengthAdjust="spacingAndGlyphs" stroke="#f0e418" stroke-width="0.3" opacity="0.92">31.8</text>
<text x="376.50" y="324.10" font-size="8.10" fill="#10e818" text-anchor="start" font-weight="normal" font-family='"Liberation Serif","Noto Serif CJK SC",serif' textLength="16.80" lengthAdjust="spacingAndGlyphs" stroke="#10e818" stroke-width="0.3" opacity="0.92">31.8</text>
<text x="376.50" y="335.40" font-size="8.10" fill="#e810e0" text-anchor="start" font-weight="normal" font-family='"Liberation Serif","Noto Serif CJK SC",serif' textLength="16.80" lengthAdjust="spacingAndGlyphs" stroke="#e810e0" stroke-width="0.3" opacity="0.92">31.3</text>
<path d="M423.10 257.70L423.10 342.20" stroke="#00f800" stroke-width="1.15" fill="none"/>
<circle cx="423.10" cy="270.50" r="2.10" fill="#000" stroke="#00f800" stroke-width="1.15"/>
<circle cx="423.10" cy="282.30" r="2.10" fill="#000" stroke="#00f800" stroke-width="1.15"/>
<rect x="419.80" y="287.70" width="6.60" height="11.70" fill="#00f800"/>
<circle cx="423.10" cy="304.40" r="2.10" fill="#000" stroke="#00f800" stroke-width="1.15"/>
<circle cx="423.10" cy="316.00" r="2.10" fill="#000" stroke="#00f800" stroke-width="1.15"/>
<path d="M417.10 342.3h12l-6 11.4z" stroke="#00f800" stroke-width="1.15" fill="none" stroke-linejoin="miter"/>
<text x="403.30" y="274.90" font-size="8.10" fill="#10d0e0" text-anchor="start" font-weight="normal" font-family='"Liberation Serif","Noto Serif CJK SC",serif' textLength="8.40" lengthAdjust="spacingAndGlyphs" stroke="#10d0e0" stroke-width="0.3" opacity="0.92">-1</text>
<text x="401.90" y="298.20" font-size="8.10" fill="#10d0e0" text-anchor="start" font-weight="normal" font-family='"Liberation Serif","Noto Serif CJK SC",serif' textLength="16.80" lengthAdjust="spacingAndGlyphs" stroke="#10d0e0" stroke-width="0.3" opacity="0.92">5514</text>
<text x="404.20" y="316.40" font-size="8.10" fill="#10d0e0" text-anchor="start" font-weight="normal" font-family='"Liberation Serif","Noto Serif CJK SC",serif' textLength="8.40" lengthAdjust="spacingAndGlyphs" stroke="#10d0e0" stroke-width="0.3" opacity="0.92">-5</text>
<text x="433.70" y="273.90" font-size="8.10" fill="#f0e418" text-anchor="start" font-weight="normal" font-family='"Liberation Serif","Noto Serif CJK SC",serif' textLength="16.80" lengthAdjust="spacingAndGlyphs" stroke="#f0e418" stroke-width="0.3" opacity="0.92">30.8</text>
<text x="433.70" y="284.20" font-size="8.10" fill="#10e818" text-anchor="start" font-weight="normal" font-family='"Liberation Serif","Noto Serif CJK SC",serif' textLength="16.80" lengthAdjust="spacingAndGlyphs" stroke="#10e818" stroke-width="0.3" opacity="0.92">30.3</text>
<text x="433.70" y="295.50" font-size="8.10" fill="#e810e0" text-anchor="start" font-weight="normal" font-family='"Liberation Serif","Noto Serif CJK SC",serif' textLength="16.80" lengthAdjust="spacingAndGlyphs" stroke="#e810e0" stroke-width="0.3" opacity="0.92">31.3</text>
<text x="433.70" y="313.90" font-size="8.10" fill="#f0e418" text-anchor="start" font-weight="normal" font-family='"Liberation Serif","Noto Serif CJK SC",serif' textLength="16.80" lengthAdjust="spacingAndGlyphs" stroke="#f0e418" stroke-width="0.3" opacity="0.92">31.0</text>
<text x="433.70" y="324.10" font-size="8.10" fill="#10e818" text-anchor="start" font-weight="normal" font-family='"Liberation Serif","Noto Serif CJK SC",serif' textLength="16.80" lengthAdjust="spacingAndGlyphs" stroke="#10e818" stroke-width="0.3" opacity="0.92">31.8</text>
<text x="433.70" y="335.40" font-size="8.10" fill="#e810e0" text-anchor="start" font-weight="normal" font-family='"Liberation Serif","Noto Serif CJK SC",serif' textLength="16.80" lengthAdjust="spacingAndGlyphs" stroke="#e810e0" stroke-width="0.3" opacity="0.92">31.8</text>
<path d="M480.50 257.70L480.50 342.20" stroke="#00f800" stroke-width="1.15" fill="none"/>
<circle cx="480.50" cy="270.50" r="2.10" fill="#000" stroke="#00f800" stroke-width="1.15"/>
<circle cx="480.50" cy="282.30" r="2.10" fill="#000" stroke="#00f800" stroke-width="1.15"/>
<rect x="477.20" y="287.70" width="6.60" height="11.70" fill="#00f800"/>
<circle cx="480.50" cy="304.40" r="2.10" fill="#000" stroke="#00f800" stroke-width="1.15"/>
<circle cx="480.50" cy="316.00" r="2.10" fill="#000" stroke="#00f800" stroke-width="1.15"/>
<path d="M474.50 342.3h12l-6 11.4z" stroke="#00f800" stroke-width="1.15" fill="none" stroke-linejoin="miter"/>
<text x="461.00" y="274.90" font-size="8.10" fill="#10d0e0" text-anchor="start" font-weight="normal" font-family='"Liberation Serif","Noto Serif CJK SC",serif' textLength="8.40" lengthAdjust="spacingAndGlyphs" stroke="#10d0e0" stroke-width="0.3" opacity="0.92">-1</text>
<text x="459.60" y="298.20" font-size="8.10" fill="#10d0e0" text-anchor="start" font-weight="normal" font-family='"Liberation Serif","Noto Serif CJK SC",serif' textLength="16.80" lengthAdjust="spacingAndGlyphs" stroke="#10d0e0" stroke-width="0.3" opacity="0.92">5513</text>
<text x="461.30" y="316.40" font-size="8.10" fill="#10d0e0" text-anchor="start" font-weight="normal" font-family='"Liberation Serif","Noto Serif CJK SC",serif' textLength="8.40" lengthAdjust="spacingAndGlyphs" stroke="#10d0e0" stroke-width="0.3" opacity="0.92">-5</text>
<text x="490.30" y="273.90" font-size="8.10" fill="#f0e418" text-anchor="start" font-weight="normal" font-family='"Liberation Serif","Noto Serif CJK SC",serif' textLength="16.80" lengthAdjust="spacingAndGlyphs" stroke="#f0e418" stroke-width="0.3" opacity="0.92">30.3</text>
<text x="490.30" y="284.20" font-size="8.10" fill="#10e818" text-anchor="start" font-weight="normal" font-family='"Liberation Serif","Noto Serif CJK SC",serif' textLength="16.80" lengthAdjust="spacingAndGlyphs" stroke="#10e818" stroke-width="0.3" opacity="0.92">31.0</text>
<text x="490.30" y="295.50" font-size="8.10" fill="#e810e0" text-anchor="start" font-weight="normal" font-family='"Liberation Serif","Noto Serif CJK SC",serif' textLength="16.80" lengthAdjust="spacingAndGlyphs" stroke="#e810e0" stroke-width="0.3" opacity="0.92">30.5</text>
<text x="490.30" y="313.90" font-size="8.10" fill="#f0e418" text-anchor="start" font-weight="normal" font-family='"Liberation Serif","Noto Serif CJK SC",serif' textLength="16.80" lengthAdjust="spacingAndGlyphs" stroke="#f0e418" stroke-width="0.3" opacity="0.92">31.8</text>
<text x="490.30" y="324.10" font-size="8.10" fill="#10e818" text-anchor="start" font-weight="normal" font-family='"Liberation Serif","Noto Serif CJK SC",serif' textLength="16.80" lengthAdjust="spacingAndGlyphs" stroke="#10e818" stroke-width="0.3" opacity="0.92">31.8</text>
<text x="490.30" y="335.40" font-size="8.10" fill="#e810e0" text-anchor="start" font-weight="normal" font-family='"Liberation Serif","Noto Serif CJK SC",serif' textLength="16.80" lengthAdjust="spacingAndGlyphs" stroke="#e810e0" stroke-width="0.3" opacity="0.92">32.0</text>
<path d="M538.00 257.70L538.00 342.20" stroke="#00f800" stroke-width="1.15" fill="none"/>
<circle cx="538.00" cy="270.50" r="2.10" fill="#000" stroke="#00f800" stroke-width="1.15"/>
<circle cx="538.00" cy="282.30" r="2.10" fill="#000" stroke="#00f800" stroke-width="1.15"/>
<rect x="534.70" y="287.70" width="6.60" height="11.70" fill="#00f800"/>
<circle cx="538.00" cy="304.40" r="2.10" fill="#000" stroke="#00f800" stroke-width="1.15"/>
<circle cx="538.00" cy="316.00" r="2.10" fill="#000" stroke="#00f800" stroke-width="1.15"/>
<path d="M532.00 342.3h12l-6 11.4z" stroke="#00f800" stroke-width="1.15" fill="none" stroke-linejoin="miter"/>
<text x="522.20" y="274.90" font-size="8.10" fill="#10d0e0" text-anchor="start" font-weight="normal" font-family='"Liberation Serif","Noto Serif CJK SC",serif' textLength="8.40" lengthAdjust="spacingAndGlyphs" stroke="#10d0e0" stroke-width="0.3" opacity="0.92">-1</text>
<text x="516.30" y="298.20" font-size="8.10" fill="#10d0e0" text-anchor="start" font-weight="normal" font-family='"Liberation Serif","Noto Serif CJK SC",serif' textLength="16.80" lengthAdjust="spacingAndGlyphs" stroke="#10d0e0" stroke-width="0.3" opacity="0.92">5512</text>
<text x="522.60" y="316.40" font-size="8.10" fill="#10d0e0" text-anchor="start" font-weight="normal" font-family='"Liberation Serif","Noto Serif CJK SC",serif' textLength="8.40" lengthAdjust="spacingAndGlyphs" stroke="#10d0e0" stroke-width="0.3" opacity="0.92">-5</text>
<text x="548.30" y="273.90" font-size="8.10" fill="#f0e418" text-anchor="start" font-weight="normal" font-family='"Liberation Serif","Noto Serif CJK SC",serif' textLength="16.80" lengthAdjust="spacingAndGlyphs" stroke="#f0e418" stroke-width="0.3" opacity="0.92">31.0</text>
<text x="548.30" y="284.20" font-size="8.10" fill="#10e818" text-anchor="start" font-weight="normal" font-family='"Liberation Serif","Noto Serif CJK SC",serif' textLength="16.80" lengthAdjust="spacingAndGlyphs" stroke="#10e818" stroke-width="0.3" opacity="0.92">30.3</text>
<text x="548.30" y="295.50" font-size="8.10" fill="#e810e0" text-anchor="start" font-weight="normal" font-family='"Liberation Serif","Noto Serif CJK SC",serif' textLength="16.80" lengthAdjust="spacingAndGlyphs" stroke="#e810e0" stroke-width="0.3" opacity="0.92">31.3</text>
<text x="548.30" y="313.90" font-size="8.10" fill="#f0e418" text-anchor="start" font-weight="normal" font-family='"Liberation Serif","Noto Serif CJK SC",serif' textLength="16.80" lengthAdjust="spacingAndGlyphs" stroke="#f0e418" stroke-width="0.3" opacity="0.92">32.0</text>
<text x="548.30" y="324.10" font-size="8.10" fill="#10e818" text-anchor="start" font-weight="normal" font-family='"Liberation Serif","Noto Serif CJK SC",serif' textLength="16.80" lengthAdjust="spacingAndGlyphs" stroke="#10e818" stroke-width="0.3" opacity="0.92">32.3</text>
<text x="548.30" y="335.40" font-size="8.10" fill="#e810e0" text-anchor="start" font-weight="normal" font-family='"Liberation Serif","Noto Serif CJK SC",serif' textLength="16.80" lengthAdjust="spacingAndGlyphs" stroke="#e810e0" stroke-width="0.3" opacity="0.92">32.0</text>
<path d="M595.40 257.70L595.40 342.20" stroke="#00f800" stroke-width="1.15" fill="none"/>
<circle cx="595.40" cy="269.70" r="2.10" fill="#000" stroke="#00f800" stroke-width="1.15"/>
<circle cx="595.40" cy="281.50" r="2.10" fill="#000" stroke="#00f800" stroke-width="1.15"/>
<rect x="592.10" y="286.90" width="6.60" height="11.70" fill="#00f800"/>
<circle cx="595.40" cy="303.60" r="2.10" fill="#000" stroke="#00f800" stroke-width="1.15"/>
<circle cx="595.40" cy="315.20" r="2.10" fill="#000" stroke="#00f800" stroke-width="1.15"/>
<path d="M589.40 342.3h12l-6 11.4z" stroke="#00f800" stroke-width="1.15" fill="none" stroke-linejoin="miter"/>
<text x="573.30" y="274.90" font-size="8.10" fill="#10d0e0" text-anchor="start" font-weight="normal" font-family='"Liberation Serif","Noto Serif CJK SC",serif' textLength="8.40" lengthAdjust="spacingAndGlyphs" stroke="#10d0e0" stroke-width="0.3" opacity="0.92">-1</text>
<text x="571.60" y="298.20" font-size="8.10" fill="#10d0e0" text-anchor="start" font-weight="normal" font-family='"Liberation Serif","Noto Serif CJK SC",serif' textLength="16.80" lengthAdjust="spacingAndGlyphs" stroke="#10d0e0" stroke-width="0.3" opacity="0.92">5511</text>
<text x="573.60" y="316.40" font-size="8.10" fill="#10d0e0" text-anchor="start" font-weight="normal" font-family='"Liberation Serif","Noto Serif CJK SC",serif' textLength="8.40" lengthAdjust="spacingAndGlyphs" stroke="#10d0e0" stroke-width="0.3" opacity="0.92">-5</text>
<text x="606.50" y="273.90" font-size="8.10" fill="#f0e418" text-anchor="start" font-weight="normal" font-family='"Liberation Serif","Noto Serif CJK SC",serif' textLength="16.80" lengthAdjust="spacingAndGlyphs" stroke="#f0e418" stroke-width="0.3" opacity="0.92">30.3</text>
<text x="606.50" y="284.20" font-size="8.10" fill="#10e818" text-anchor="start" font-weight="normal" font-family='"Liberation Serif","Noto Serif CJK SC",serif' textLength="16.80" lengthAdjust="spacingAndGlyphs" stroke="#10e818" stroke-width="0.3" opacity="0.92">30.5</text>
<text x="606.50" y="295.50" font-size="8.10" fill="#e810e0" text-anchor="start" font-weight="normal" font-family='"Liberation Serif","Noto Serif CJK SC",serif' textLength="16.80" lengthAdjust="spacingAndGlyphs" stroke="#e810e0" stroke-width="0.3" opacity="0.92">30.0</text>
<text x="606.50" y="313.90" font-size="8.10" fill="#f0e418" text-anchor="start" font-weight="normal" font-family='"Liberation Serif","Noto Serif CJK SC",serif' textLength="16.80" lengthAdjust="spacingAndGlyphs" stroke="#f0e418" stroke-width="0.3" opacity="0.92">32.0</text>
<text x="606.50" y="324.10" font-size="8.10" fill="#10e818" text-anchor="start" font-weight="normal" font-family='"Liberation Serif","Noto Serif CJK SC",serif' textLength="16.80" lengthAdjust="spacingAndGlyphs" stroke="#10e818" stroke-width="0.3" opacity="0.92">31.8</text>
<text x="606.50" y="335.40" font-size="8.10" fill="#e810e0" text-anchor="start" font-weight="normal" font-family='"Liberation Serif","Noto Serif CJK SC",serif' textLength="16.80" lengthAdjust="spacingAndGlyphs" stroke="#e810e0" stroke-width="0.3" opacity="0.92">32.0</text>
<text x="33.20" y="273.90" font-size="7.90" fill="#fcfc00" text-anchor="start" font-weight="bold" font-family='"Liberation Sans","Noto Sans CJK SC",sans-serif' textLength="12.00" lengthAdjust="spacingAndGlyphs" >A相</text>
<text x="33.20" y="284.20" font-size="7.90" fill="#00f800" text-anchor="start" font-weight="bold" font-family='"Liberation Sans","Noto Sans CJK SC",sans-serif' textLength="12.00" lengthAdjust="spacingAndGlyphs" >B相</text>
<text x="33.20" y="295.50" font-size="7.90" fill="#e800e8" text-anchor="start" font-weight="bold" font-family='"Liberation Sans","Noto Sans CJK SC",sans-serif' textLength="12.00" lengthAdjust="spacingAndGlyphs" >C相</text>
<text x="33.20" y="313.90" font-size="7.90" fill="#fcfc00" text-anchor="start" font-weight="bold" font-family='"Liberation Sans","Noto Sans CJK SC",sans-serif' textLength="12.00" lengthAdjust="spacingAndGlyphs" >A相</text>
<text x="33.20" y="324.10" font-size="7.90" fill="#00f800" text-anchor="start" font-weight="bold" font-family='"Liberation Sans","Noto Sans CJK SC",sans-serif' textLength="12.00" lengthAdjust="spacingAndGlyphs" >B相</text>
<text x="33.20" y="335.40" font-size="7.90" fill="#e800e8" text-anchor="start" font-weight="bold" font-family='"Liberation Sans","Noto Sans CJK SC",sans-serif' textLength="12.00" lengthAdjust="spacingAndGlyphs" >C相</text>
</svg>
</body></html>
